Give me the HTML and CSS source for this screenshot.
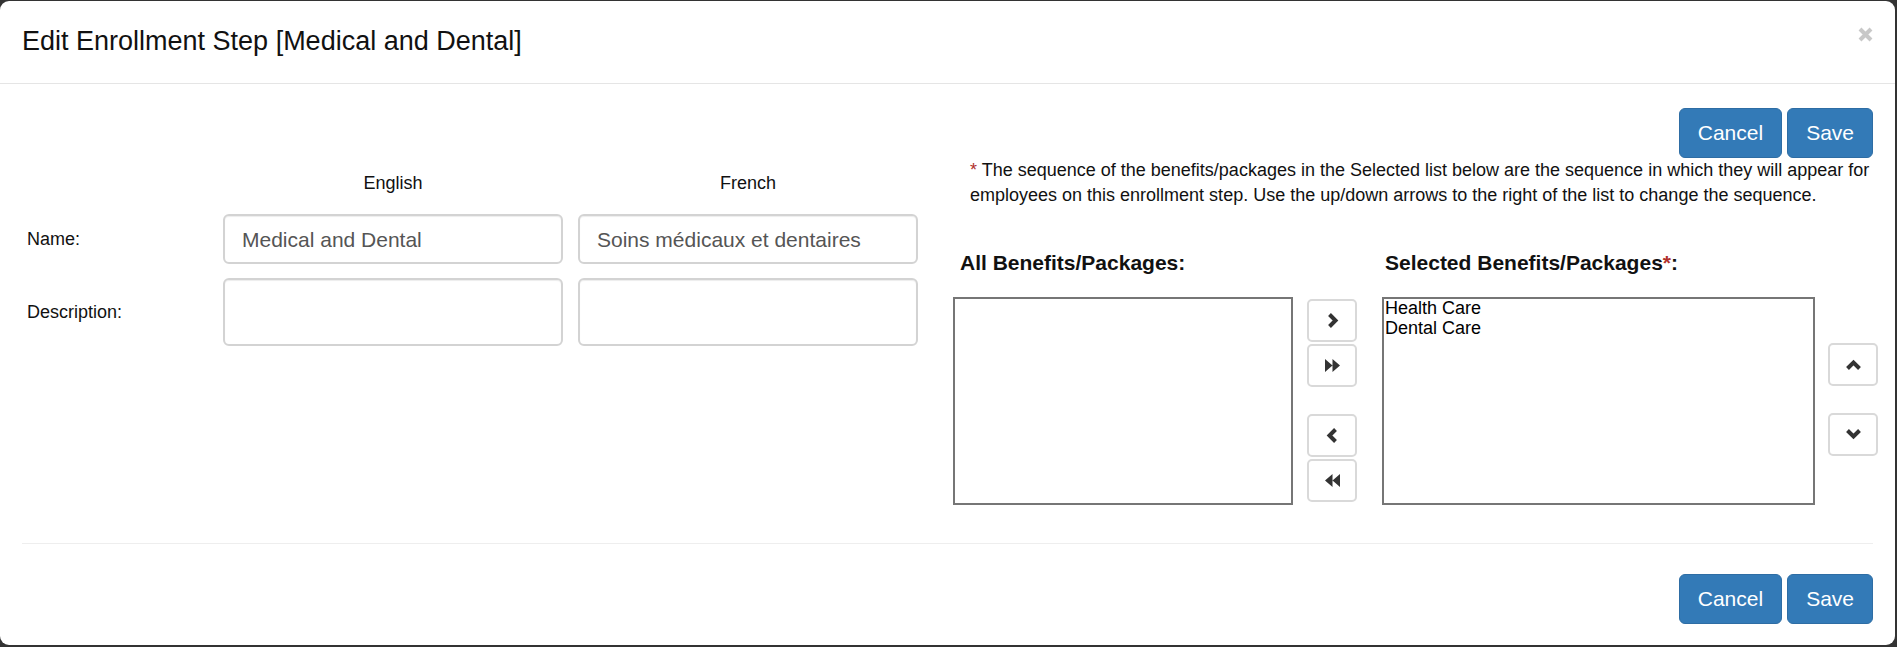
FILE: index.html
```html
<!DOCTYPE html>
<html lang="en">
<head>
<meta charset="utf-8">
<title>Edit Enrollment Step</title>
<link rel="stylesheet" href="styles.css">
</head>
<body>
<div class="modal">
  <div class="modal-header">
    <h4 class="modal-title">Edit Enrollment Step [Medical and Dental]</h4>
    <button class="close" aria-label="Close">
      <svg width="15" height="15" viewBox="0 0 15 15"><path d="M2 2 L13 13 M13 2 L2 13" stroke="#c8c8c8" stroke-width="4" fill="none"/></svg>
    </button>
  </div>
  <div class="modal-body">
    <div class="actions">
      <button class="btn btn-primary">Cancel</button>
      <button class="btn btn-primary">Save</button>
    </div>
    <div class="content">
      <div class="lang-grid">
        <div></div>
        <div class="col-head">English</div>
        <div class="col-head">French</div>
        <label class="row-label">Name:</label>
        <input class="form-control name-input" type="text" value="Medical and Dental">
        <input class="form-control name-input" type="text" value="Soins médicaux et dentaires">
        <label class="row-label">Description:</label>
        <textarea class="form-control desc-input"></textarea>
        <textarea class="form-control desc-input"></textarea>
      </div>
      <div class="picker-area">
        <p class="note"><span class="req">*</span> The sequence of the benefits/packages in the Selected list below are the sequence in which they will appear for employees on this enrollment step. Use the up/down arrows to the right of the list to change the sequence.</p>
        <div class="picker">
          <div class="pick-label all-label">All Benefits/Packages:</div>
          <div></div>
          <div class="pick-label sel-label">Selected Benefits/Packages<span class="req">*</span>:</div>
          <div></div>
          <div class="listbox all-list" role="listbox"></div>
          <div class="move-col">
            <div class="btn-group">
              <button class="btn-sm" aria-label="Add"><svg width="13" height="15" viewBox="0 0 13 15"><path d="M3.5 1.5 L9.5 7.5 L3.5 13.5" fill="none" stroke="#333" stroke-width="4"/></svg></button>
              <button class="btn-sm" aria-label="Add all"><svg width="17" height="15" viewBox="0 0 17 15"><path d="M1 1 L8.5 7.5 L1 14 Z M8.5 1 L16 7.5 L8.5 14 Z" fill="#333"/></svg></button>
            </div>
            <div class="btn-group">
              <button class="btn-sm" aria-label="Remove"><svg width="13" height="15" viewBox="0 0 13 15"><path d="M9.5 1.5 L3.5 7.5 L9.5 13.5" fill="none" stroke="#333" stroke-width="4"/></svg></button>
              <button class="btn-sm" aria-label="Remove all"><svg width="17" height="15" viewBox="0 0 17 15"><path d="M16 1 L8.5 7.5 L16 14 Z M8.5 1 L1 7.5 L8.5 14 Z" fill="#333"/></svg></button>
            </div>
          </div>
          <div class="listbox sel-list" role="listbox">
            <div class="option">Health Care</div>
            <div class="option">Dental Care</div>
          </div>
          <div class="order-col">
            <button class="btn-sm" aria-label="Move up"><svg width="15" height="11" viewBox="0 0 15 11"><path d="M1.5 9.5 L7.5 3.5 L13.5 9.5" fill="none" stroke="#333" stroke-width="4"/></svg></button>
            <button class="btn-sm" aria-label="Move down"><svg width="15" height="11" viewBox="0 0 15 11"><path d="M1.5 1.5 L7.5 7.5 L13.5 1.5" fill="none" stroke="#333" stroke-width="4"/></svg></button>
          </div>
        </div>
      </div>
    </div>
    <hr class="divider">
    <div class="actions footer-actions">
      <button class="btn btn-primary">Cancel</button>
      <button class="btn btn-primary">Save</button>
    </div>
  </div>
</div>
</body>
</html>
```
FILE: styles.css
```css
html, body {
  margin: 0;
  padding: 0;
}
body {
  background: #333333;
  font-family: "Liberation Sans", Arial, sans-serif;
  color: #111111;
  overflow: hidden;
}
.modal {
  margin-top: 1px;
  width: 1895px;
  background: #ffffff;
  border-radius: 9px;
  box-sizing: border-box;
}
.modal-header {
  display: flex;
  justify-content: space-between;
  align-items: flex-start;
  padding: 21px 22px 22px 22px;
  border-bottom: 1px solid #e5e5e5;
}
.modal-title {
  margin: 0;
  font-size: 27px;
  line-height: 39px;
  font-weight: normal;
  color: #111111;
}
.close {
  margin-top: 5px;
  padding: 0;
  border: 0;
  background: none;
  width: 15px;
  height: 15px;
  display: block;
}
.close svg {
  display: block;
}
.modal-body {
  padding: 0 22px 21px 22px;
}
.actions {
  display: flex;
  justify-content: flex-end;
  gap: 5px;
  margin-top: 24px;
}
.btn {
  font-family: "Liberation Sans", Arial, sans-serif;
  font-size: 21px;
  line-height: 30px;
  padding: 9px 18px;
  border-radius: 6px;
  border: 1px solid #2e6da4;
  cursor: pointer;
}
.btn-primary {
  background: #337ab7;
  color: #ffffff;
}
.content {
  display: flex;
  gap: 35px;
}
.lang-grid {
  width: 896px;
  flex: none;
  display: grid;
  grid-template-columns: 186px 340px 340px;
  column-gap: 15px;
  row-gap: 14px;
  align-content: start;
}
.col-head {
  font-size: 18px;
  line-height: 26px;
  text-align: center;
  margin-top: 12px;
  margin-bottom: 4px;
}
.row-label {
  font-size: 18px;
  line-height: 26px;
  align-self: center;
  padding-left: 5px;
}
.form-control {
  box-sizing: border-box;
  width: 340px;
  border: 2px solid #d3d3d3;
  border-radius: 6px;
  box-shadow: inset 0 1px 1px rgba(0, 0, 0, 0.075);
  font-family: "Liberation Sans", Arial, sans-serif;
  font-size: 21px;
  color: #555555;
  padding: 0 17px;
  margin: 0;
  background: #ffffff;
}
.name-input {
  height: 50px;
  padding-top: 2px;
}
.desc-input {
  height: 68px;
  resize: none;
  padding-top: 8px;
  display: block;
}
.picker-area {
  width: 920px;
  flex: none;
}
.note {
  margin: 0 -14px 40px 0;
  padding-left: 17px;
  font-size: 18px;
  line-height: 25px;
  color: #111111;
}
.req {
  color: #b0302c;
}
.picker {
  display: grid;
  grid-template-columns: 340px 64px 458px 63px;
  grid-template-rows: 30px 208px;
  row-gap: 19px;
}
.pick-label {
  font-size: 21px;
  line-height: 30px;
  font-weight: bold;
  white-space: nowrap;
}
.all-label {
  padding-left: 7px;
}
.sel-label {
  padding-left: 28px;
}
.listbox {
  box-sizing: border-box;
  border: 2px solid #767676;
  background: #ffffff;
  height: 208px;
}
.all-list {
  width: 340px;
}
.sel-list {
  width: 433px;
  justify-self: end;
  padding: 0 1px;
}
.option {
  font-size: 18px;
  line-height: 20px;
  color: #000000;
}
.option:first-child {
  margin-top: -1px;
}
.move-col {
  justify-self: end;
  display: flex;
  flex-direction: column;
  gap: 27px;
  padding-top: 2px;
}
.btn-group {
  display: flex;
  flex-direction: column;
  gap: 2px;
}
.order-col {
  justify-self: end;
  display: flex;
  flex-direction: column;
  gap: 27px;
  padding-top: 46px;
}
.btn-sm {
  box-sizing: border-box;
  width: 50px;
  height: 43px;
  background: #ffffff;
  border: 2px solid #d9d9d9;
  border-radius: 5px;
  padding: 0;
  display: flex;
  align-items: center;
  justify-content: center;
  cursor: pointer;
}
.btn-sm svg {
  display: block;
}
.divider {
  margin: 38px 0 0 0;
  border: 0;
  border-top: 1px solid #eeeeee;
  height: 0;
}
.footer-actions {
  margin-top: 30px;
}
```
